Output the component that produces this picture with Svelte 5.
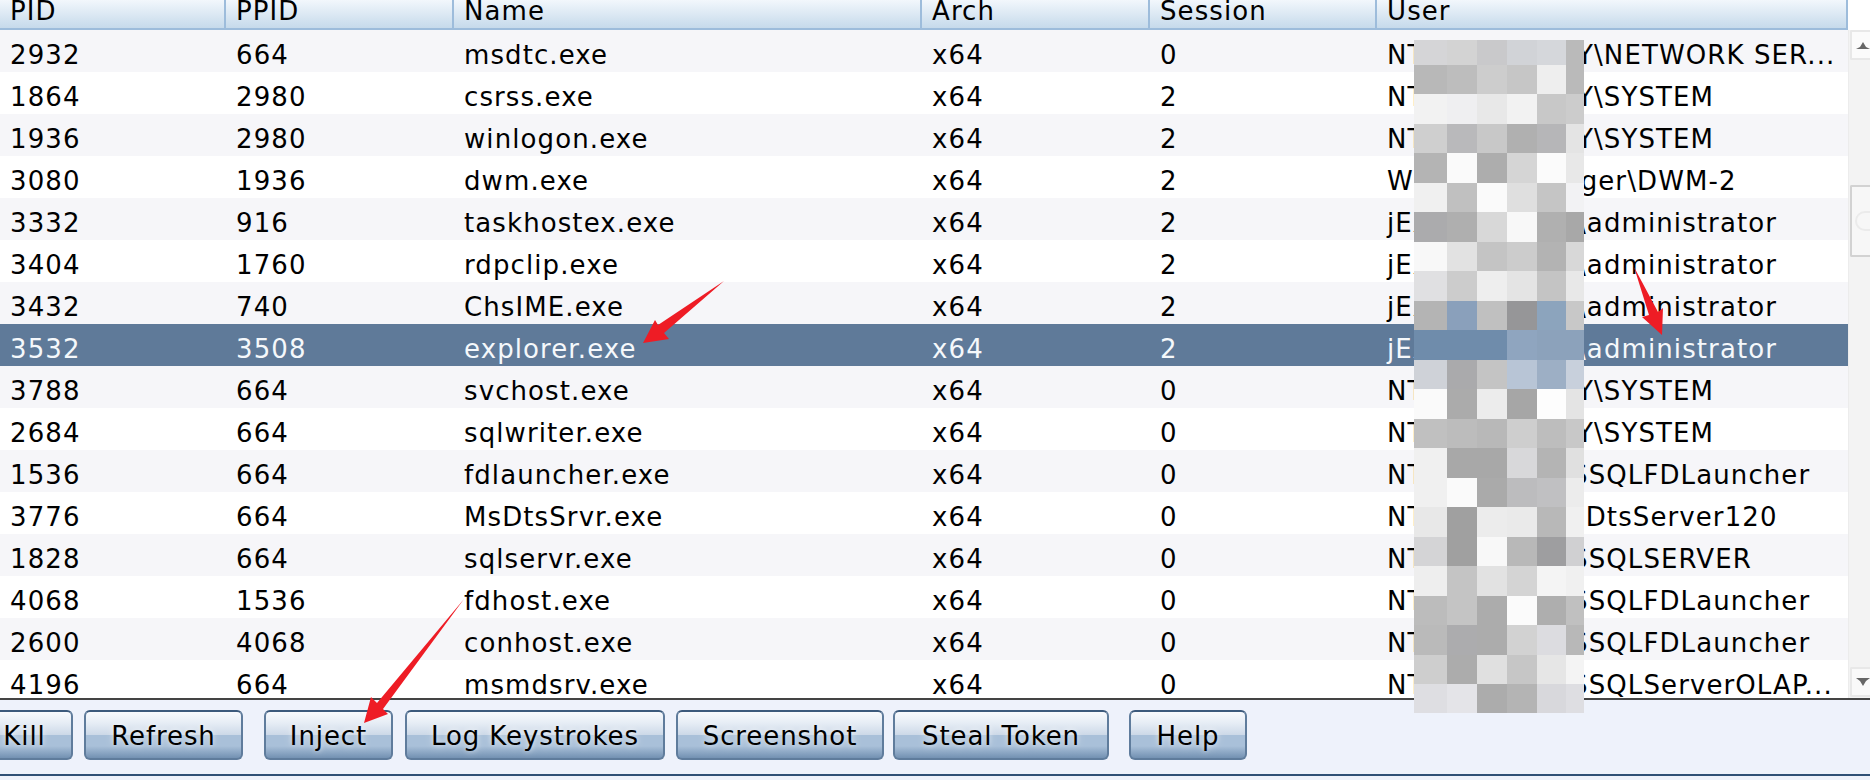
<script>
  const columns = ['PID', 'PPID', 'Name', 'Arch', 'Session', 'User'];

  const rows = [
    ['2932', '664', 'msdtc.exe', 'x64', '0', 'NT AUTHORITY\\NETWORK SER...'],
    ['1864', '2980', 'csrss.exe', 'x64', '2', 'NT AUTHORITY\\SYSTEM'],
    ['1936', '2980', 'winlogon.exe', 'x64', '2', 'NT AUTHORITY\\SYSTEM'],
    ['3080', '1936', 'dwm.exe', 'x64', '2', 'Window Manager\\DWM-2'],
    ['3332', '916', 'taskhostex.exe', 'x64', '2', 'jEXAMPLE001\\administrator'],
    ['3404', '1760', 'rdpclip.exe', 'x64', '2', 'jEXAMPLE001\\administrator'],
    ['3432', '740', 'ChsIME.exe', 'x64', '2', 'jEXAMPLE001\\administrator'],
    ['3532', '3508', 'explorer.exe', 'x64', '2', 'jEXAMPLE001\\administrator'],
    ['3788', '664', 'svchost.exe', 'x64', '0', 'NT AUTHORITY\\SYSTEM'],
    ['2684', '664', 'sqlwriter.exe', 'x64', '0', 'NT AUTHORITY\\SYSTEM'],
    ['1536', '664', 'fdlauncher.exe', 'x64', '0', 'NT Service\\MSSQLFDLauncher'],
    ['3776', '664', 'MsDtsSrvr.exe', 'x64', '0', 'NT Service\\MsDtsServer120'],
    ['1828', '664', 'sqlservr.exe', 'x64', '0', 'NT Service\\MSSQLSERVER'],
    ['4068', '1536', 'fdhost.exe', 'x64', '0', 'NT Service\\MSSQLFDLauncher'],
    ['2600', '4068', 'conhost.exe', 'x64', '0', 'NT Service\\MSSQLFDLauncher'],
    ['4196', '664', 'msmdsrv.exe', 'x64', '0', 'NT Service\\MSSQLServerOLAP...']
  ];

  const selectedPid = '3532';

  // width and left gap of each toolbar button
  const buttons = [
    { label: 'Kill', width: 97, gap: 0 },
    { label: 'Refresh', width: 159, gap: 11 },
    { label: 'Inject', width: 129, gap: 21 },
    { label: 'Log Keystrokes', width: 260, gap: 12 },
    { label: 'Screenshot', width: 208, gap: 11 },
    { label: 'Steal Token', width: 216, gap: 9 },
    { label: 'Help', width: 118, gap: 20 }
  ];

  // blurred block over the user column
  const mosaicCols = [33, 30, 30, 30, 29, 18];
  const mosaicHeights = [25, 29, 30, 29, 30, 29, 30, 29, 30, 29, 30, 29, 30, 29, 30, 29, 30, 29, 30, 29, 30, 29, 29];
  const mosaic = [
    ['d5d5d7', 'd3d3d3', 'c9c9cb', 'd1d3d7', 'd5d7db', 'bababa'],
    ['b8b8b8', 'bdbdbd', 'cdcdcd', 'c6c6c6', 'eeeeee', 'bababa'],
    ['f2f2f2', 'efeff1', 'e8e8e8', 'f2f2f2', 'c8c8c8', 'cccccc'],
    ['cfcfcf', 'b9b9bb', 'c8c8c8', 'b0b0b0', 'b6b6b8', 'e4e4e4'],
    ['b4b4b4', 'fafafa', 'adadad', 'd5d5d5', 'fbfbfb', 'e8e8e8'],
    ['f0f0f0', 'c0c0c0', 'fafafa', 'dfdfdf', 'c5c5c5', 'f2f2f4'],
    ['ababad', 'afafaf', 'd8d8d8', 'f8f8f8', 'b0b0b0', 'a8a8a8'],
    ['f8f8f8', 'e2e2e2', 'c4c4c4', 'cccccc', 'b3b3b3', 'd8d8d8'],
    ['e0e0e2', 'cccccc', 'eeeeee', 'e4e4e4', 'c4c4c4', 'e8e8e8'],
    ['b4b4b4', '8aa0bb', 'c0c0c0', '969698', '8ca4bd', 'c8c8c8'],
    ['6f8cab', '6f8cab', '6f8cab', '8fa5bf', '8ca2bb', '8ca2bb'],
    ['cfd2d8', 'aaaaac', 'c4c4c4', 'b8c5d6', '9dafc5', 'c8d0dc'],
    ['fafafa', 'ababab', 'ececec', 'a6a6a6', 'fdfdfd', 'e4e4e4'],
    ['c0c0c0', 'bcbcbc', 'b8b8b8', 'cecece', 'bdbdbd', 'c8c8c8'],
    ['f0f0f0', 'a8a8a8', 'a8a8a8', 'd8d8da', 'b4b4b4', 'e0e0e0'],
    ['f0f0f0', 'fafafa', 'aaaaaa', 'bcbcbe', 'c0c0c2', 'ececec'],
    ['e8e8e8', 'a0a0a0', 'ececec', 'eaeaea', 'b8b8b8', 'f0f0f0'],
    ['d4d4d6', 'a0a0a0', 'f8f8f8', 'b8b8b8', '9e9ea0', 'd0d0d2'],
    ['eeeeee', 'c4c4c4', 'e2e2e2', 'd4d4d4', 'f4f4f4', 'f0f0f0'],
    ['bcbcbc', 'c4c4c4', 'acacac', 'fbfbfb', 'aeaeae', 'c0c0c0'],
    ['bababa', 'acacae', 'acacac', 'd2d2d2', 'dcdce0', 'b8b8b8'],
    ['cecece', 'acacac', 'e0e0e0', 'c6c6c6', 'e6e6e6', 'f4f4f4'],
    ['dedee2', 'e4e4e8', 'acacac', 'b4b4b4', 'd8d8dc', 'dedee2']
  ];

  const gridCols = mosaicCols.map((w) => w + 'px').join(' ');
  const gridRows = mosaicHeights.map((h) => h + 'px').join(' ');

  const arrows = [
    '724,281 658,325 655,320 643,343 669,339 664,333',
    '1634,267 1649,315 1642,317 1662,335 1663,308 1658,312',
    '464,599 377,703 371,697 364,723 388,714 383,709'
  ];
</script>

<div class="app">
  <div class="top">
    <div class="table">
      <div class="head">
        {#each columns as col}
          <div class="head-cell">{col}</div>
        {/each}
      </div>
      {#each rows as row, i}
        <div class="row" class:alt={i % 2 === 0} class:selected={row[0] === selectedPid}>
          {#each row as value}
            <div class="cell">{value}</div>
          {/each}
        </div>
      {/each}
    </div>
    <div class="scrollbar">
      <div class="scroll-btn">
        <svg width="14" height="8" viewBox="0 0 14 8"><path d="M0 8 L4 6 L7 1 L10 6 L14 8 Z" fill="#666"/></svg>
      </div>
      <div class="thumb"><span class="grip"></span></div>
      <div class="scroll-btn down">
        <svg width="14" height="8" viewBox="0 0 14 8"><path d="M0 0 L14 0 L10 3 L7 8 L4 3 Z" fill="#666"/></svg>
      </div>
    </div>
  </div>

  <div class="toolbar">
    {#each buttons as btn}
      <button class="tool-btn" style="width: {btn.width}px; margin-left: {btn.gap}px">{btn.label}</button>
    {/each}
  </div>
  <div class="bottom-line"></div>

  <div class="mosaic" style="grid-template-columns: {gridCols}; grid-template-rows: {gridRows}">
    {#each mosaic as line}
      {#each line as shade}
        <span style="background: #{shade}"></span>
      {/each}
    {/each}
  </div>

  <svg class="arrows" width="1870" height="780" viewBox="0 0 1870 780">
    {#each arrows as points}
      <polygon {points} fill="#ee1c25" />
    {/each}
  </svg>
</div>

<style>
  :global(body) {
    margin: 0;
    background: #fff;
  }

  .app {
    position: relative;
    width: 1870px;
    height: 780px;
    overflow: hidden;
    font-family: "DejaVu Sans", sans-serif;
    font-size: 26px;
    letter-spacing: 1.1px;
    color: #000;
    background: #eef2fb;
  }

  .top {
    display: flex;
    height: 698px;
    background: #fff;
    overflow: hidden;
  }

  .table {
    width: 1848px;
    flex-shrink: 0;
  }

  .head,
  .row {
    display: grid;
    grid-template-columns: 226px 228px 468px 228px 227px 471px;
  }

  .head {
    height: 30px;
    box-sizing: border-box;
    border-bottom: 2px solid #9dbcdb;
    background: linear-gradient(#f2f7fc, #c6daeb);
  }

  .head-cell {
    box-sizing: border-box;
    height: 28px;
    padding-left: 10px;
    line-height: 23px;
    border-right: 2px solid #9dbcdb;
    white-space: nowrap;
  }

  .row {
    height: 42px;
    background: #fff;
  }

  .row.alt {
    background: #f6f6f9;
  }

  .row.selected {
    background: #5f7a99;
    color: #f5f8fb;
  }

  .cell {
    padding: 4px 0 0 10px;
    line-height: 42px;
    height: 38px;
    white-space: nowrap;
    overflow: hidden;
  }

  .scrollbar {
    flex: 1;
    margin-top: 30px;
    display: flex;
    flex-direction: column;
    background: #f3f3f3;
    box-shadow: inset 1px 0 0 #ececec;
  }

  .scroll-btn {
    height: 30px;
    margin-left: 2px;
    box-sizing: border-box;
    border: 2px solid #e8e8e8;
    border-right: none;
    border-radius: 2px 0 0 2px;
    background: #fbfbfb;
    display: flex;
    justify-content: center;
    align-items: center;
    padding-left: 2px;
  }

  .scroll-btn.down {
    margin-top: 410px;
    background: #f9f9f9;
  }

  .thumb {
    margin-top: 125px;
    margin-left: 2px;
    height: 72px;
    box-sizing: border-box;
    border: 2px solid #d2d2d2;
    border-right: none;
    border-radius: 2px 0 0 2px;
    background: #f7f7f7;
    display: flex;
    align-items: center;
    padding-left: 3px;
  }

  .grip {
    width: 17px;
    height: 20px;
    box-sizing: border-box;
    border: 2px solid #ebebeb;
    border-right: none;
    border-radius: 10px 0 0 10px;
  }

  .toolbar {
    display: flex;
    height: 76px;
    box-sizing: border-box;
    margin-left: -24px;
    padding-top: 10px;
    border-top: 2px solid #444;
    background: #eef2fb;
    align-items: flex-start;
  }

  .tool-btn {
    height: 50px;
    flex-shrink: 0;
    padding: 2px 0 0;
    box-sizing: border-box;
    font: inherit;
    letter-spacing: 0.9px;
    color: #000;
    border: 2px solid #5f7c9c;
    border-top-color: #3c5a7c;
    border-radius: 6px;
    background: linear-gradient(#f8fafd 0%, #e6edf5 24%, #cdd9e8 49%, #a9c0d9 50%, #a9c0d9 74%, #7391b2 100%);
    text-shadow: 0 0 5px rgba(255, 255, 255, 0.6), 0 0 10px rgba(255, 255, 255, 0.45);
  }

  .bottom-line {
    height: 2px;
    background: #2f5075;
  }

  .mosaic {
    position: absolute;
    left: 1414px;
    top: 40px;
    display: grid;
  }

  .arrows {
    position: absolute;
    left: 0;
    top: 0;
  }
</style>
